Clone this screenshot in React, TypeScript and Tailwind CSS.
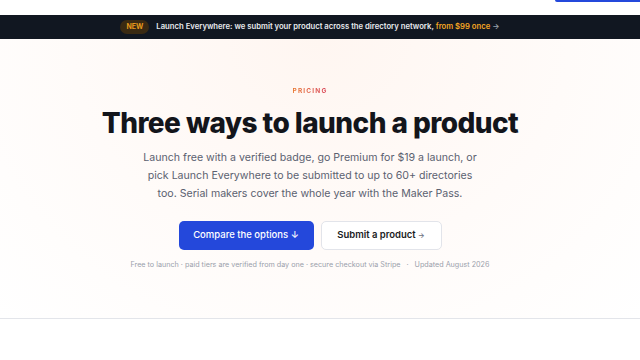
export default function App() {
  return (
    <div className="min-h-screen bg-white text-[#111318]" style={{ fontFamily: "Inter, 'Noto Sans', sans-serif" }}>
      {/* Header (scrolled, only the edge of the CTA shows) */}
      <header className="h-[15px] flex justify-end items-start overflow-hidden">
        <div className="w-[85px] h-[2px] bg-[#2448db] rounded-bl-[3px]" />
      </header>

      {/* Announcement bar */}
      <div className="h-[24px] bg-[#111721] flex items-center justify-center pr-[20px] gap-[7px] text-[7.7px] font-semibold">
        <span className="px-[6px] py-[2px] rounded-full bg-[#3a2a12] text-[#e69a1c] text-[7px] font-bold">NEW</span>
        <span className="text-[#e8eaee]">
          Launch Everywhere: we submit your product across the directory network,{" "}
          <span className="text-[#f5a623]">from $99 once</span>{" "}
          <span className="text-[#9aa0aa]">→</span>
        </span>
      </div>

      {/* Hero */}
      <section className="h-[280px] border-b border-[#e3e5ea] bg-[radial-gradient(ellipse_at_50%_0%,#fff6f1_0%,#fffbf9_55%,#ffffff_100%)]">
        <div className="flex flex-col items-center pr-[20px] pt-[48px]">
          <p className="text-[6.5px] font-bold tracking-[0.18em] bg-gradient-to-r from-[#e8742a] to-[#d9465a] bg-clip-text text-transparent">
            PRICING
          </p>
          <h1 className="mt-[9px] text-[28px] leading-[34px] font-extrabold tracking-[-0.02em] text-[#13151b]">
            Three ways to launch a product
          </h1>
          <p className="mt-[9px] w-[345px] text-center text-[10.6px] leading-[18px] text-[#5b6170]">
            Launch free with a verified badge, go Premium for $19 a launch, or pick Launch Everywhere to be submitted to up to 60+ directories too. Serial makers cover the whole year with the Maker Pass.
          </p>
          <div className="mt-[18px] flex gap-[7px]">
            <button className="h-[29px] w-[135px] rounded-[5px] bg-[#2448db] text-white text-[9.5px] font-medium">
              Compare the options ↓
            </button>
            <button className="h-[29px] w-[121px] rounded-[5px] bg-white border border-[#e2e4ea] text-[#1a1c22] text-[9.5px] font-semibold">
              Submit a product <span className="text-[7px] text-[#6b7280]">→</span>
            </button>
          </div>
          <p className="mt-[10px] text-[7.2px] text-[#9aa0ab] flex gap-[6px]">
            <span>Free to launch · paid tiers are verified from day one · secure checkout via Stripe</span>
            <span>·</span>
            <span>Updated August 2026</span>
          </p>
        </div>
      </section>
    </div>
  );
}
